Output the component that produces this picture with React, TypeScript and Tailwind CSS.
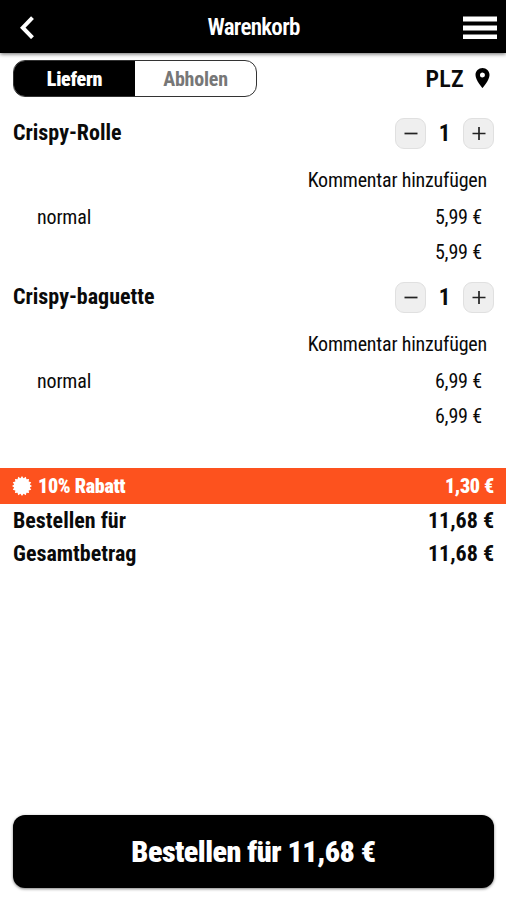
import React from "react";

function Stepper() {
  return (
    <div className="flex items-center">
      <button className="flex h-[31px] w-[31px] items-center justify-center rounded-[9px] border border-[#e0e0e0] bg-[#efefef]">
        <svg width="14" height="14" viewBox="0 0 14 14" stroke="#222" strokeWidth="1.7"><path d="M0.5 6.5H13.5" /></svg>
      </button>
      <span className="w-[37px] text-center text-[23px] leading-[31px] font-bold">1</span>
      <button className="flex h-[31px] w-[31px] items-center justify-center rounded-[9px] border border-[#e0e0e0] bg-[#efefef]">
        <svg width="14" height="14" viewBox="0 0 14 14" stroke="#222" strokeWidth="1.7"><path d="M0.5 6.5H13.5M7 0V13" /></svg>
      </button>
    </div>
  );
}

function CartItem({ name, price }: { name: string; price: string }) {
  return (
    <section className="h-[164px]">
      <div className="flex h-[31px] justify-between pr-3 pl-[13px]">
        <h2 className="text-[22px] leading-[29px] font-bold">{name}</h2>
        <Stepper />
      </div>
      <div className="mt-[13px] pr-[19px] text-right text-[20px] leading-[37px] tracking-[-0.2px]">Kommentar hinzufügen</div>
      <div className="flex justify-between pr-[24px] pl-[37px] text-[20px] leading-[36px] tracking-[-0.15px]">
        <span>normal</span>
        <span>{price}</span>
      </div>
      <div className="pr-[24px] text-right text-[20px] leading-[35px] tracking-[-0.15px]">{price}</div>
    </section>
  );
}

function Seal() {
  const points = Array.from({ length: 32 }, (_, i) => {
    const r = i % 2 ? 8 : 10;
    const a = (i * Math.PI) / 16;
    return `${10 + r * Math.sin(a)},${10 - r * Math.cos(a)}`;
  }).join(" ");
  return <svg width="20" height="20" viewBox="0 0 20 20" fill="white"><polygon points={points} /></svg>;
}

export default function App() {
  return (
    <div className="flex h-[900px] w-[506px] flex-col bg-white font-['Roboto_Condensed','Roboto',sans-serif] text-[#0a0a0a] [font-stretch:75%]">
      <header className="flex h-[53px] shrink-0 items-center justify-between bg-black pr-[9px] pl-[20px] text-white shadow-[0_1px_4px_rgba(0,0,0,0.6)]">
        <svg width="34" height="24" viewBox="0 0 34 24" fill="none" stroke="white" strokeWidth="4"><path d="M12.5 2.7L2.8 12.7L12.5 22.7" /></svg>
        <h1 className="mt-[3px] mr-[10px] text-[23px] font-semibold tracking-[-0.7px]">Warenkorb</h1>
        <svg width="34" height="24" viewBox="0 0 34 24" fill="white"><path d="M0 1.5H34V6.5H0zM0 10.5H34V15.5H0zM0 19.5H34V24H0z" /></svg>
      </header>
      <div className="flex h-[65px] shrink-0 items-start justify-between pt-[7px] pr-[16px] pl-[13px]">
        <div className="flex h-[37px] w-[244px] overflow-hidden rounded-[12px] border border-[#333] text-[20px] leading-[37px] font-bold">
          <div className="w-[121px] bg-black text-center font-black tracking-[-0.3px] text-white">Liefern</div>
          <div className="flex-1 text-center tracking-[-0.2px] text-[#777]">Abholen</div>
        </div>
        <div className="flex h-[37px] items-center gap-[11px]">
          <span className="text-[24px] font-semibold tracking-[0.3px]">PLZ</span>
          <svg className="-mt-[2px]" width="15" height="20" viewBox="5 2 14 20" fill="black"><path fillRule="evenodd" d="M12 2C8.13 2 5 5.13 5 9c0 5.25 7 13 7 13s7-7.75 7-13c0-3.87-3.13-7-7-7zm0 9.5a2.5 2.5 0 1 1 0-5 2.5 2.5 0 0 1 0 5z" /></svg>
        </div>
      </div>
      <main className="flex-1">
        <CartItem name="Crispy-Rolle" price="5,99 €" />
        <CartItem name="Crispy-baguette" price="6,99 €" />
        <div className="mt-[22px] flex h-[36px] items-center justify-between bg-[#fd521e] pr-[12px] pl-[12px] text-[20px] font-black tracking-[-0.3px] text-white">
          <div className="flex items-center gap-[6px]"><Seal /><span>10% Rabatt</span></div>
          <span>1,30 €</span>
        </div>
        <div className="flex justify-between pr-[12px] pl-[13px] text-[22px] leading-[33px] font-bold"><span>Bestellen für</span><span>11,68 €</span></div>
        <div className="flex justify-between pr-[12px] pl-[13px] text-[22px] leading-[33px] font-bold"><span>Gesamtbetrag</span><span>11,68 €</span></div>
      </main>
      <button className="mx-3 mb-[12px] ml-[13px] h-[73px] shrink-0 rounded-[12px] bg-black text-[30px] font-black tracking-[-0.5px] text-white shadow-[0_1px_3px_rgba(0,0,0,0.5)]">Bestellen für 11,68 €</button>
    </div>
  );
}
